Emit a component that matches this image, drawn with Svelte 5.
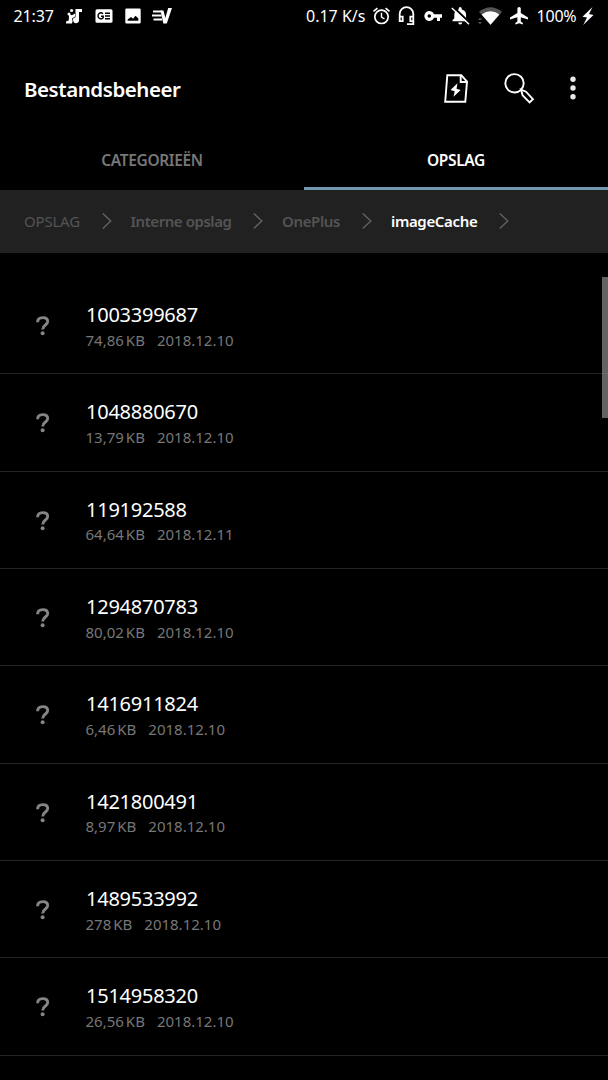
<script>
  const files = [
    { name: '1003399687', size: '74,86', unit: 'KB', date: '2018.12.10' },
    { name: '1048880670', size: '13,79', unit: 'KB', date: '2018.12.10' },
    { name: '119192588', size: '64,64', unit: 'KB', date: '2018.12.11' },
    { name: '1294870783', size: '80,02', unit: 'KB', date: '2018.12.10' },
    { name: '1416911824', size: '6,46', unit: 'KB', date: '2018.12.10' },
    { name: '1421800491', size: '8,97', unit: 'KB', date: '2018.12.10' },
    { name: '1489533992', size: '278', unit: 'KB', date: '2018.12.10' },
    { name: '1514958320', size: '26,56', unit: 'KB', date: '2018.12.10' },
  ];
</script>

{#snippet chevron()}
  <svg class="chevron" width="10" height="16" viewBox="0 0 10 16"><path d="M.8 .5L8.800 8L.8 15.500" /></svg>
{/snippet}

<main>
  <header class="status">
    <div class="group left">
      <span class="clock">21:37</span>
      <svg class="music" width="17" height="16" viewBox="0 0 17 16">
        <path d="M9.500 1h6.500v3h-3v8a3 3 0 1 1-3.500-2.800z" />
        <circle cx="5.600" cy="2.500" r="1.600" />
        <circle cx="3" cy="6" r="1.500" />
        <path d="M3 6.200l3 1 3-1.700v3L6 10.400l.6 2.600-.6 2.500H0l.2-2.300 2.600-.7z" />
      </svg>
      <svg class="ge" width="18" height="14" viewBox="0 0 18 14">
        <rect x=".5" y=".3" width="17" height="13.400" rx="1.500" />
        <path class="cut" d="M8 4.700A3 2.900 0 1 0 8.200 8.800V7.200H6M10 4.200h5M10 7h5M10 9.800h5" />
      </svg>
      <svg class="image" width="16" height="16" viewBox="0 0 16 16">
        <path fill-rule="evenodd" d="M1.500.5h13q1.200 0 1.200 1.200v12.600q0 1.200-1.200 1.200h-13q-1.200 0-1.200-1.200V1.700Q.3.500 1.500.5zM2.600 12.800h10.800V10.500L10.500 7.800l-2.500 3-2-1.800-3.400 2.500z" />
      </svg>
      <svg class="ev" width="20" height="16" viewBox="0 0 20 16">
        <path class="line" stroke-width="2" d="M1 3.400h9M0 7.500h9.500M1.500 11.500h8.500" />
        <path d="M8.500 2.500h3l1.800 7.500L16.200 0H20l-5.200 15.500h-3.500z" />
      </svg>
    </div>
    <div class="group right">
      <span class="speed">0.17 K/s</span>
      <svg class="alarm" width="18" height="18" viewBox="0 0 18 18">
        <g class="line"><circle cx="8.500" cy="9.800" r="6.700" stroke-width="1.700" /><path stroke-width="1.700" d="M.5 4.400L4.400 1.200M16.500 4.400L12.600 1.200" /><path stroke-width="1.400" d="M8.500 5.800v4.300l3 1.900" /></g>
      </svg>
      <svg class="headset" width="16" height="20" viewBox="0 0 16 20">
        <path class="line" stroke-width="1.800" d="M.7 14V8a6.800 6.800 0 0 1 13.600 0v10.200H8M.7 10.700h3v4.500h-3zM11.300 10.700h3v4.500h-3z" />
      </svg>
      <svg class="key" width="18" height="12" viewBox="0 0 18 12">
        <path fill-rule="evenodd" d="M10 4.200A5 5 0 1 0 10 7.800h3V11h3V7.800h2V4.200zM5.300 4.200a1.800 1.800 0 1 1 0 3.600 1.800 1.800 0 0 1 0-3.600z" />
      </svg>
      <svg class="bell" width="19" height="18" viewBox="0 0 19 18">
        <path d="M1.500 14.200v-1.200l1.800-1.600V8c0-3 1.600-4.900 4.400-5.400V1.400a1.500 1.500 0 0 1 3 0v1.200c2.800.5 4.400 2.400 4.400 5.400v3.400l1.800 1.600v1.200zM7.200 15.400h4a2 2 0 0 1-4 0z" />
        <path class="gap" d="M2.500 .2L19 16" /><path class="line" stroke-width="1.500" d="M.8 1L18 17.200" />
      </svg>
      <svg class="wifi" width="25" height="18" viewBox="0 0 25 18">
        <path fill="#555" d="M1 4.800Q12.500-4.200 24 4.800L12.500 18z" />
        <path d="M3.600 7.600Q12.500 1 21.400 7.600L12.500 17.800z" />
        <path fill="#555" d="M0 13l2-2.300L4 13zM0 15l2 2.300L4 15z" />
      </svg>
      <svg class="plane" width="18" height="18" viewBox="0 0 18 18">
        <path d="M18 12.500v-1.900L10.800 6V1.600a1.700 1.700 0 0 0-3.400 0V6L0 10.600v1.900l7.400-2.300v4.300L5.300 16v1.400L9.100 16.300l3.800 1.100V16l-2.100-1.500v-4.300z" />
      </svg>
      <span class="percent">100%</span>
      <svg class="bolt" width="12" height="18" viewBox="0 0 12 18"><path d="M10.500 0L.5 9.700l4.500.8L1.200 18 11.500 8 7 7z" /></svg>
    </div>
  </header>

  <section class="appbar">
    <h1>Bestandsbeheer</h1>
    <div class="actions">
      <svg width="24" height="29" viewBox="0 0 24 29">
        <path class="line" stroke-width="1.900" d="M3.300 1.200H17.300L23 7.500L21.300 27.700H1.200zM16.700 1.500V8h6" />
        <path d="M13.500 9.300L6.500 16l4.200 1.200-1.200 5.500 7.200-6.800-4.200-1.200z" />
      </svg>
      <svg class="search" width="30" height="31" viewBox="0 0 30 31">
        <g class="line" stroke-width="1.900"><circle cx="10.500" cy="10.300" r="9.200" /><path d="M17 16.700l1.600 5.600 7 7.200 3.300-3.300-6.900-7.500z" /></g>
      </svg>
      <svg class="more" width="6" height="24" viewBox="0 0 6 24"><circle cx="3" cy="3.300" r="2.700" /><circle cx="3" cy="12" r="2.700" /><circle cx="3" cy="20.700" r="2.700" /></svg>
    </div>
  </section>

  <nav class="tabs">
    <div class="tab"><span>CATEGORIEËN</span></div>
    <div class="tab active"><span>OPSLAG</span></div>
  </nav>

  <nav class="crumbs">
    <span class="c1">OPSLAG</span>{@render chevron()}
    <span class="c2">Interne opslag</span>{@render chevron()}
    <span class="c3">OnePlus</span>{@render chevron()}
    <span class="c4">imageCache</span>{@render chevron()}
  </nav>

  <section class="list">
    {#each files as file}
      <article>
        <svg class="unknown" width="14" height="20" viewBox="0 0 14 20">
          <path d="M1.600 6.200C1.600 3 3.800 1.600 6.800 1.600C10 1.600 11.700 3.200 11.700 5.600C11.700 9.200 6.700 8.900 6.700 13.400" />
          <circle cx="6.600" cy="17.300" r="2" />
        </svg>
        <div>
          <div class="name">{file.name}</div>
          <div class="meta"><span>{file.size}<i>{file.unit}</i></span><span>{file.date}</span></div>
        </div>
      </article>
    {/each}
    <div class="scrollbar"></div>
  </section>
</main>

<style>
  :global(body) { margin: 0; background: #000; }
  main {
    width: 608px; height: 1080px; overflow: hidden; background: #000; color: #fff;
    font-family: "Noto Sans", sans-serif; display: flex; flex-direction: column;
  }
  main > * { flex-shrink: 0; box-sizing: border-box; }
  svg { display: block; fill: #fff; flex: none; overflow: visible; }
  span, h1, .name { white-space: nowrap; }
  .line { fill: none; stroke: #fff; }
  .status { height: 32px; display: flex; justify-content: space-between; padding: 0 14px 0 13.5px; font-size: 16px; }
  .group { display: flex; align-items: center; }
  .clock { width: 52.5px; letter-spacing: -0.1px; }
  .ge { margin-left: 11.5px; }
  .cut { fill: none; stroke: #000; stroke-width: 1.4; }
  .image { margin-left: 12px; }
  .ev { margin-left: 11px; }
  .speed { width: 66.5px; }
  .headset { margin-left: 8px; }
  .key { margin-left: 9px; }
  .bell { margin-left: 9px; }
  .gap { fill: none; stroke: #000; stroke-width: 2; }
  .wifi { margin-left: 8px; }
  .plane { margin-left: 7px; }
  .percent { width: 45.5px; margin-left: 9px; letter-spacing: -0.2px; }
  .appbar { height: 98px; padding: 0 32px 0 24px; display: flex; justify-content: space-between; align-items: center; }
  h1 { margin: 15px 0 0; font-size: 20.5px; line-height: 28px; font-weight: 600; letter-spacing: -0.44px; }
  .actions { display: flex; align-items: center; margin-top: 14px; }
  .search { margin-left: 35.5px; }
  .more { margin-left: 36.5px; fill: #e8e8e8; }
  .tabs { height: 60px; display: grid; grid-template-columns: 1fr 1fr; }
  .tab { display: flex; align-items: center; justify-content: center; font-size: 15.5px; letter-spacing: -0.35px; font-weight: 600; color: #777; box-sizing: border-box; border-bottom: 3px solid transparent; padding-top: 3px; }
  .active { color: #fff; border-color: #7098b0; }
  .crumbs { height: 63px; background: #212121; display: flex; align-items: center; padding: 0 0 2px 24px; font-size: 15px; color: #545454; font-weight: 600; }
  .c1 { width: 77.5px; font-weight: 400; letter-spacing: -0.2px; }
  .c2 { width: 122.5px; letter-spacing: -0.45px; }
  .c3 { width: 80px; letter-spacing: -0.35px; }
  .c4 { width: 108px; color: #fff; letter-spacing: -0.35px; }
  .chevron { margin-right: 19px; fill: none; stroke: #626262; stroke-width: 1.4; }
  .list { position: relative; height: 827px; padding-top: 24px; }
  article { height: 97.35px; box-sizing: border-box; border-bottom: 1px solid #242424; display: flex; padding-left: 36px; }
  .unknown { margin: 39px 36px 0 0; fill: #858585; }
  .unknown path { fill: none; stroke: #858585; stroke-width: 2.9; }
  .name { margin-top: 24px; font-size: 20px; line-height: 28px; letter-spacing: -0.25px; }
  .meta { display: flex; gap: 12px; margin-top: -1.3px; margin-left: -0.5px; font-size: 15px; line-height: 24px; color: #777; }
  i { font-style: normal; margin-left: 2px; }
  .scrollbar { position: absolute; right: 0; top: 24px; width: 6px; height: 140.5px; background: rgba(150, 150, 150, .65); }
</style>
